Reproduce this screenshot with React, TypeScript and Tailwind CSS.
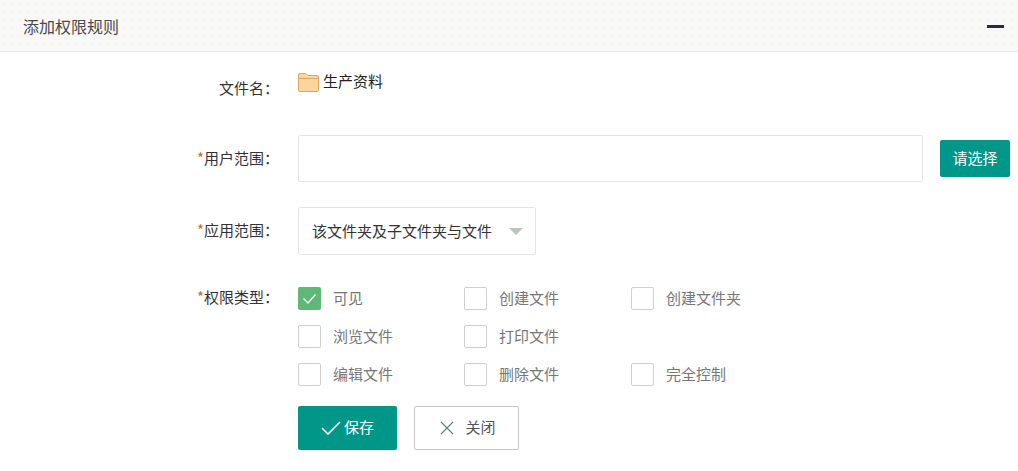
import React from "react";

const font = { fontFamily: '"Noto Sans CJK SC", "Noto Sans", sans-serif' };

function Label({ star, text, className }: { star?: boolean; text: string; className?: string }) {
  return (
    <div className={"w-[298px] shrink-0 pr-[19px] text-right text-[15px] leading-[20px] text-[#333333] " + (className ?? "")}>
      {star && <span className="text-[#b8741a]">*</span>}
      {text}：
    </div>
  );
}

function Check({ label, checked }: { label: string; checked?: boolean }) {
  return (
    <div className="flex h-[22px] items-center">
      {checked ? (
        <span className="flex h-[23px] w-[23px] items-center justify-center rounded-[2px] bg-[#5fb878]">
          <svg width="15" height="15" viewBox="0 0 15 15" fill="none" stroke="#fff" strokeWidth="1.3">
            <path d="M1.5 7.5 L6 12 L13.5 3.5" />
          </svg>
        </span>
      ) : (
        <span className="h-[23px] w-[23px] rounded-[2px] border border-[#cfcfcf] bg-white" />
      )}
      <span className="ml-[12px] text-[15px] leading-[20px] text-[#777777]">{label}</span>
    </div>
  );
}

export default function App() {
  return (
    <div className="h-[471px] w-[1018px] overflow-hidden bg-white" style={font}>
      <div className="flex h-[52px] items-center justify-between border-b border-[#e7e7e7] bg-[#f8f8f6] bg-[radial-gradient(#f3f3f0_1px,transparent_1px)] bg-[length:8px_8px] pl-[23px] pr-[14px]">
        <span className="text-[16px] leading-[24px] text-[#4a4a4a]">添加权限规则</span>
        <span className="h-[3px] w-[17px] translate-y-[1px] bg-[#2a2a40]" />
      </div>

      <div className="flex h-[70px] items-start pt-[26px]">
        <Label text="文件名" />
        <div className="-mt-[8px] flex items-center">
          <svg width="21" height="19" viewBox="0 0 21 19" className="mt-[3px] shrink-0">
            <path d="M0.5 17.5 V2 Q0.5 0.5 2 0.5 H8 L10 2.5 H19 Q20.5 2.5 20.5 4 V17.5 Q20.5 18.5 19.5 18.5 H1.5 Q0.5 18.5 0.5 17.5 Z" fill="#f9d79c" stroke="#dfa765" />
            <path d="M0.5 5.5 H20.5" stroke="#dfa765" fill="none" />
          </svg>
          <span className="ml-[4px] text-[15px] leading-[20px] text-[#222222]">生产资料</span>
        </div>
      </div>

      <div className="flex h-[73px] items-center">
        <Label star text="用户范围" className="pb-[2px]" />
        <div className="h-[47px] w-[625px] rounded-[2px] border border-[#e6e6e6] bg-white" />
        <button className="ml-[17px] h-[37px] w-[70px] rounded-[2px] bg-[#009688] text-[15px] text-white">请选择</button>
      </div>

      <div className="mt-[12px] flex h-[48px] items-center">
        <Label star text="应用范围" className="pb-[2px]" />
        <div className="flex h-[48px] w-[238px] items-center justify-between rounded-[2px] border border-[#e6e6e6] bg-white pl-[13px] pr-[12px]">
          <span className="text-[15px] leading-[20px] text-[#333333]">该文件夹及子文件夹与文件</span>
          <span className="h-0 w-0 border-x-[7px] border-t-[7px] border-x-transparent border-t-[#b9c9b5]" />
        </div>
      </div>

      <div className="mt-[32px] flex items-start">
        <Label star text="权限类型" />
        <div className="grid w-[500px] grid-cols-[166px_167px_167px] gap-y-[16px]">
          <Check checked label="可见" />
          <Check label="创建文件" />
          <Check label="创建文件夹" />
          <Check label="浏览文件" />
          <Check label="打印文件" />
          <div />
          <Check label="编辑文件" />
          <Check label="删除文件" />
          <Check label="完全控制" />
        </div>
      </div>

      <div className="ml-[298px] mt-[21px] flex gap-[17px]">
        <button className="flex h-[44px] w-[99px] items-center justify-center rounded-[2px] bg-[#009688] pb-[2px] text-[15px] text-white">
          <svg width="20" height="16" viewBox="0 0 20 16" fill="none" stroke="#fff" strokeWidth="1.6" className="mr-[3px] mt-[2px]">
            <path d="M1 8 L7 14 L19 2" />
          </svg>
          保存
        </button>
        <button className="flex h-[44px] w-[105px] items-center justify-center rounded-[2px] border border-[#c9c9c9] bg-white pb-[1px] pl-[3px] text-[15px] text-[#555555]">
          <svg width="14" height="14" viewBox="0 0 14 14" fill="none" stroke="#5f7f80" strokeWidth="1.1" className="mr-[11px] mt-[1px]">
            <path d="M1 1 L13 13 M13 1 L1 13" />
          </svg>
          关闭
        </button>
      </div>
    </div>
  );
}
